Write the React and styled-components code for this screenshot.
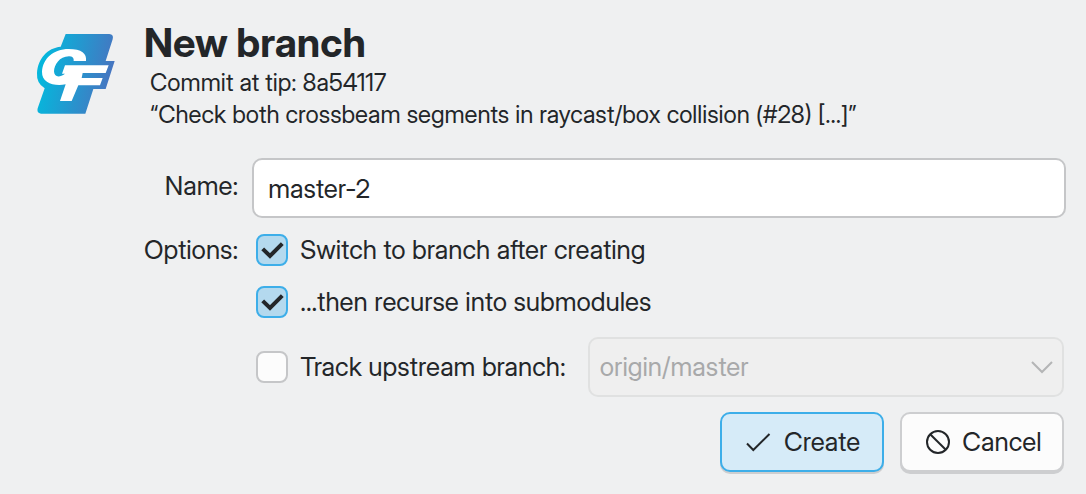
import React, { useState } from "react";
import styled, { createGlobalStyle } from "styled-components";

const GlobalStyle = createGlobalStyle`
  *, *::before, *::after { box-sizing: border-box; }
  body {
    margin: 0;
    background: #eff0f1;
    color: #232629;
    font-family: "Inter Display", Inter, "Liberation Sans", sans-serif;
    font-size: 26px;
    line-height: 34px;
  }
`;

const Dialog = styled.form`
  display: flex;
  align-items: flex-start;
  gap: 28px;
  padding: 21px 20px 20px 36px;
`;

const Logo = styled.svg`
  flex: none;
  width: 80px;
  height: 82px;
  margin-top: 12px;
`;

const Main = styled.div`
  flex: 1;
  min-width: 0;
`;

const Title = styled.h1`
  margin: 0 0 2px;
  font-size: 40px;
  line-height: 44px;
  font-weight: 700;
`;

const Summary = styled.p`
  margin: 0 0 27px;
  padding-left: 6px;
  font-size: 24px;
  line-height: 32px;
`;

const Fields = styled.div`
  display: grid;
  grid-template-columns: auto 1fr;
  column-gap: 14px;
  row-gap: 15px;
`;

const FieldLabel = styled.label`
  justify-self: end;
  align-self: start;
  padding-top: ${(p) => (p.$tall ? "11px" : "0")};
`;

const TextInput = styled.input`
  width: 100%;
  height: 60px;
  padding: 0 14px;
  border: 2px solid #c5c6c8;
  border-radius: 10px;
  background: #fff;
  color: inherit;
  font: inherit;
  outline: none;
`;

const Options = styled.div`
  display: flex;
  flex-direction: column;
  gap: 18px;
  padding: 0 2px 0 4px;
`;

const OptionRow = styled.div`
  display: flex;
  align-items: center;
  gap: 22px;
`;

const Option = styled.label`
  display: flex;
  align-items: center;
  gap: 12px;
  white-space: nowrap;
`;

const CheckFrame = styled.span`
  display: grid;
  flex: none;
  width: 32px;
  height: 32px;

  & > * { grid-area: 1 / 1; }
  & > svg { pointer-events: none; visibility: hidden; }
  & > input:checked + svg { visibility: visible; }
`;

const CheckInput = styled.input`
  appearance: none;
  width: 32px;
  height: 32px;
  margin: 0;
  border: 2px solid #c5c6c8;
  border-radius: 8px;
  background: #fcfcfc;

  &:checked {
    border-color: #3daee9;
    background: #b4d9ee;
  }
`;

const SelectFrame = styled.div`
  display: grid;
  flex: 1;
  min-width: 0;
  align-items: center;

  & > * { grid-area: 1 / 1; }
  & > svg { justify-self: end; margin-right: 11px; pointer-events: none; }
`;

const Select = styled.select`
  appearance: none;
  width: 100%;
  height: 60px;
  padding: 0 40px 0 10px;
  border: 2px solid #e0e1e1;
  border-radius: 10px;
  background: #efefef;
  color: #a8a9aa;
  font: inherit;
  opacity: 1;
`;

const Actions = styled.div`
  display: flex;
  justify-content: flex-end;
  gap: 16px;
  padding: 15px 2px 0 0;
`;

const Button = styled.button`
  display: flex;
  align-items: center;
  justify-content: center;
  gap: 12px;
  min-width: 164px;
  height: 60px;
  padding: 0 20px;
  border: 2px solid ${(p) => (p.$primary ? "#3daee9" : "#cdced0")};
  border-radius: 10px;
  background: ${(p) => (p.$primary ? "#d6ebf8" : "#fcfcfc")};
  box-shadow: 0 2px 0 #cdced0;
  color: inherit;
  font: inherit;
`;

function CheckBox(props) {
  return (
    <CheckFrame>
      <CheckInput type="checkbox" {...props} />
      <svg width="32" height="32" viewBox="0 0 32 32" fill="none" stroke="#232629" strokeWidth="4" aria-hidden="true">
        <path d="M6.7 14.8 14 22 26.3 9.7" />
      </svg>
    </CheckFrame>
  );
}

function BrandMark() {
  return (
    <Logo viewBox="50 39 240 246" aria-hidden="true">
      <defs>
        <linearGradient id="brand" gradientUnits="userSpaceOnUse" x1="70" y1="150" x2="275" y2="190">
          <stop offset="0" stopColor="#06b6dc" />
          <stop offset="1" stopColor="#4774c0" />
        </linearGradient>
      </defs>
      <path
        fill="url(#brand)"
        d="M139 42H270Q284 43 280 58L259 123H286L259 207H222L198 281H65Q51 279 55 265L76 205Q51 190 53 159C56 115 84 84 124 80Z"
      />
      <path
        fill="#fff"
        d="M200 123H163Q165 109 149 109C120 109 105 135 104 154C104 169 118 176 137 161H128L137 136H268L259 159H190L187 174H250L242 196H177L157 243H122L139 193C103 199 67 189 68 155C70 116 102 87 148 87C187 87 203 101 200 123Z"
      />
    </Logo>
  );
}

export default function App() {
  const [name, setName] = useState("master-2");
  const [switchTo, setSwitchTo] = useState(true);
  const [recurse, setRecurse] = useState(true);
  const [track, setTrack] = useState(false);

  return (
    <>
      <GlobalStyle />
      <Dialog onSubmit={(e) => e.preventDefault()}>
        <BrandMark />
        <Main>
          <Title>New branch</Title>
          <Summary>
            Commit at tip: 8a54117
            <br />
            “Check both crossbeam segments in raycast/box collision (#28) [...]”
          </Summary>
          <Fields>
            <FieldLabel htmlFor="name" $tall>Name:</FieldLabel>
            <TextInput id="name" type="text" value={name} onChange={(e) => setName(e.target.value)} />
            <FieldLabel as="span" id="options">Options:</FieldLabel>
            <Options role="group" aria-labelledby="options">
              <Option>
                <CheckBox checked={switchTo} onChange={(e) => setSwitchTo(e.target.checked)} />
                Switch to branch after creating
              </Option>
              <Option>
                <CheckBox checked={recurse} onChange={(e) => setRecurse(e.target.checked)} />
                ...then recurse into submodules
              </Option>
              <OptionRow>
                <Option>
                  <CheckBox checked={track} onChange={(e) => setTrack(e.target.checked)} />
                  Track upstream branch:
                </Option>
                <SelectFrame>
                  <Select aria-label="Upstream branch" disabled={!track}>
                    <option>origin/master</option>
                  </Select>
                  <svg width="22" height="14" viewBox="0 0 22 14" fill="none" stroke="#b4b5b6" strokeWidth="2" aria-hidden="true">
                    <path d="M1 2 11 12 21 2" />
                  </svg>
                </SelectFrame>
              </OptionRow>
            </Options>
          </Fields>
          <Actions>
            <Button type="submit" $primary>
              <svg width="28" height="28" viewBox="0 0 28 28" fill="none" stroke="#232629" strokeWidth="2" aria-hidden="true">
                <path d="M3 15.5 9.3 22 25.5 6" />
              </svg>
              Create
            </Button>
            <Button type="button">
              <svg width="28" height="28" viewBox="0 0 28 28" fill="none" stroke="#232629" strokeWidth="2" aria-hidden="true">
                <circle cx="16" cy="14" r="11" />
                <path d="M8.2 6.2 23.8 21.8" />
              </svg>
              Cancel
            </Button>
          </Actions>
        </Main>
      </Dialog>
    </>
  );
}
